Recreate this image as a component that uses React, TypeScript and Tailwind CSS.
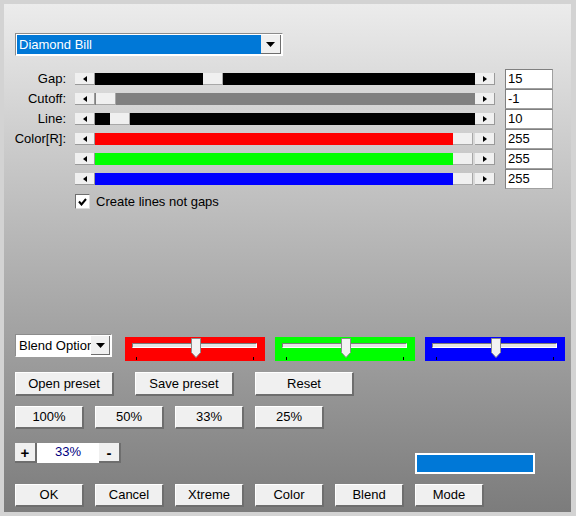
import React from "react";

const font = { fontFamily: '"Liberation Sans", Arial, sans-serif' };

function Btn({ label, w, h = "h-[23px]" }: { label: string; w: string; h?: string }) {
  return (
    <div
      className={`${w} ${h} flex items-center justify-center bg-[#f0f0f0] text-[13px] text-black border-t border-l border-t-white border-l-white border-b-2 border-r-2 border-b-[#6e6e6e] border-r-[#6e6e6e] shrink-0`}
    >
      {label}
    </div>
  );
}

function Arrow({ dir }: { dir: "left" | "right" | "down" }) {
  if (dir === "down") {
    return (
      <svg width="9" height="5" viewBox="0 0 9 5">
        <path d="M0 0 H9 L4.5 5 Z" fill="#000" />
      </svg>
    );
  }
  return (
    <svg width="4" height="6" viewBox="0 0 4 6">
      <path d={dir === "left" ? "M4 0 V6 L0 3 Z" : "M0 0 V6 L4 3 Z"} fill="#000" />
    </svg>
  );
}

function ScrollBtn({ dir }: { dir: "left" | "right" }) {
  return (
    <div className="w-[20px] h-full flex items-center justify-center bg-[#f0f0f0] border-r border-b border-r-[#9a9a9a] border-b-[#9a9a9a] shrink-0">
      <Arrow dir={dir} />
    </div>
  );
}

function Thumb() {
  return <div className="w-[20px] h-full bg-[#f0f0f0] border-r border-b border-r-[#a8a8a8] border-b-[#a8a8a8] shrink-0" />;
}

type Row = { label: string; value: string; color: string; before: number; after?: string };

const rows: Row[] = [
  { label: "Gap:", value: "15", color: "bg-black", before: 108 },
  { label: "Cutoff:", value: "-1", color: "bg-[#808080]", before: 1 },
  { label: "Line:", value: "10", color: "bg-black", before: 15 },
  { label: "Color[R]:", value: "255", color: "bg-[#ff0000]", before: 358, after: "bg-[#d8d8d8]" },
  { label: "", value: "255", color: "bg-[#00ff00]", before: 358, after: "bg-[#d8d8d8]" },
  { label: "", value: "255", color: "bg-[#0000ff]", before: 358, after: "bg-[#d8d8d8]" },
];

function ScrollRow({ row }: { row: Row }) {
  return (
    <div className="flex items-center h-[20px]">
      <div className="w-[51px] mr-[9px] text-right text-[13px] text-black whitespace-nowrap flex justify-end">
        {row.label}
      </div>
      <div className="w-[420px] h-[12px] flex">
        <ScrollBtn dir="left" />
        <div className="flex-1 flex h-full">
          <div className={`${row.color} h-full`} style={{ width: row.before }} />
          <Thumb />
          <div className={`${row.after ?? row.color} flex-1 h-full`} />
        </div>
        <ScrollBtn dir="right" />
      </div>
      <div className="ml-[10px] w-[48px] h-[20px] bg-white border border-[#808080] border-b-[#a0a0a0] border-r-[#a0a0a0] pl-[2px] text-[13px] leading-[18px] text-black">
        {row.value}
      </div>
    </div>
  );
}

function ColorSlider({ bg }: { bg: string }) {
  return (
    <div className={`${bg} w-[140px] h-[24px] relative shrink-0`}>
      <div className="absolute left-[7px] top-[6px] w-[125px] h-[5px] bg-[#e4e4e4] border-t border-l border-[#7a7a7a] border-b border-b-white border-r border-r-white" />
      <svg className="absolute left-[66px] top-[1px]" width="10" height="20" viewBox="0 0 10 20">
        <path d="M0.5 0.5 H9.5 V14.5 L5 19.5 L0.5 14.5 Z" fill="#f2f2f2" stroke="#8a8a8a" />
      </svg>
      <div className="absolute left-[11px] top-[20px] w-px h-[3px] bg-black" />
      <div className="absolute left-[128px] top-[20px] w-px h-[3px] bg-black" />
    </div>
  );
}

export default function App() {
  return (
    <div className="w-[576px] h-[516px] bg-[#d3d3d3] pt-[4px] pl-[4px] pr-[5px] pb-[4px]" style={font}>
      <div className="w-full h-full bg-gradient-to-b from-[#ececec] to-[#7c7c7c] pl-[11px] pt-[29px] flex flex-col">
        {/* preset dropdown */}
        <div className="w-[268px] h-[23px] flex border border-[#8c8c8c] border-b-white border-r-white p-px bg-white">
          <div className="flex-1 bg-[#0078d7] text-white text-[13px] leading-[19px] pl-[2px]">Diamond Bill</div>
          <div className="w-[20px] h-full flex items-center justify-center bg-[#f0f0f0] border-r border-b border-r-[#6e6e6e] border-b-[#6e6e6e]">
            <Arrow dir="down" />
          </div>
        </div>

        <div className="mt-[13px] flex flex-col">
          {rows.map((r, i) => (
            <ScrollRow key={i} row={r} />
          ))}
        </div>

        {/* checkbox */}
        <div className="mt-[5px] pl-[60px] flex items-center h-[15px]">
          <div className="w-[15px] h-[15px] bg-white border border-[#6e6e6e] border-b-[#dcdcdc] border-r-[#dcdcdc] flex items-center justify-center">
            <svg width="9" height="8" viewBox="0 0 9 8">
              <path d="M1 3.5 L3.5 6.5 L8 1" fill="none" stroke="#000" strokeWidth="2" />
            </svg>
          </div>
          <span className="ml-[6px] text-[13px] text-black">Create lines not gaps</span>
        </div>

        {/* blend options + color sliders */}
        <div className="mt-[125px] flex items-start">
          <div className="w-[97px] h-[23px] flex bg-white border border-[#8c8c8c] border-b-white border-r-white">
            <div className="flex-1 overflow-hidden whitespace-nowrap text-[13px] leading-[21px] pl-[3px] text-black">
              Blend Options
            </div>
            <div className="w-[19px] my-px mr-px flex items-center justify-center bg-[#f0f0f0] border-r border-b border-r-[#6e6e6e] border-b-[#6e6e6e]">
              <Arrow dir="down" />
            </div>
          </div>
          <div className="ml-[13px] mt-[3px] flex gap-[10px]">
            <ColorSlider bg="bg-[#ff0000]" />
            <ColorSlider bg="bg-[#00ff00]" />
            <ColorSlider bg="bg-[#0000ff]" />
          </div>
        </div>

        <div className="mt-[11px] flex gap-[21px]">
          <Btn label="Open preset" w="w-[99px]" h="h-[24px]" />
          <Btn label="Save preset" w="w-[99px]" h="h-[24px]" />
          <Btn label="Reset" w="w-[99px]" h="h-[24px]" />
        </div>

        <div className="mt-[10px] flex gap-[11px]">
          <Btn label="100%" w="w-[69px]" />
          <Btn label="50%" w="w-[69px]" />
          <Btn label="33%" w="w-[69px]" />
          <Btn label="25%" w="w-[69px]" />
        </div>

        {/* zoom */}
        <div className="mt-[14px] flex items-start">
          <div className="w-[22px] h-[20px] flex items-center justify-center bg-[#f0f0f0] text-[15px] font-bold leading-none border-r-2 border-b-2 border-r-[#6e6e6e] border-b-[#6e6e6e]">
            +
          </div>
          <div className="w-[62px] h-[20px] bg-white text-[13px] text-[#000080] text-center leading-[18px]">33%</div>
          <div className="w-[22px] h-[20px] flex items-center justify-center bg-[#f0f0f0] text-[15px] font-bold leading-none border-r-2 border-b-2 border-r-[#6e6e6e] border-b-[#6e6e6e]">
            -
          </div>
          <div className="ml-[294px] mt-[10px] w-[120px] h-[21px] bg-[#0078d7] border-2 border-white" />
        </div>

        <div className="mt-[10px] flex gap-[11px]">
          <Btn label="OK" w="w-[69px]" />
          <Btn label="Cancel" w="w-[69px]" />
          <Btn label="Xtreme" w="w-[69px]" />
          <Btn label="Color" w="w-[69px]" />
          <Btn label="Blend" w="w-[69px]" />
          <Btn label="Mode" w="w-[69px]" />
        </div>
      </div>
    </div>
  );
}
